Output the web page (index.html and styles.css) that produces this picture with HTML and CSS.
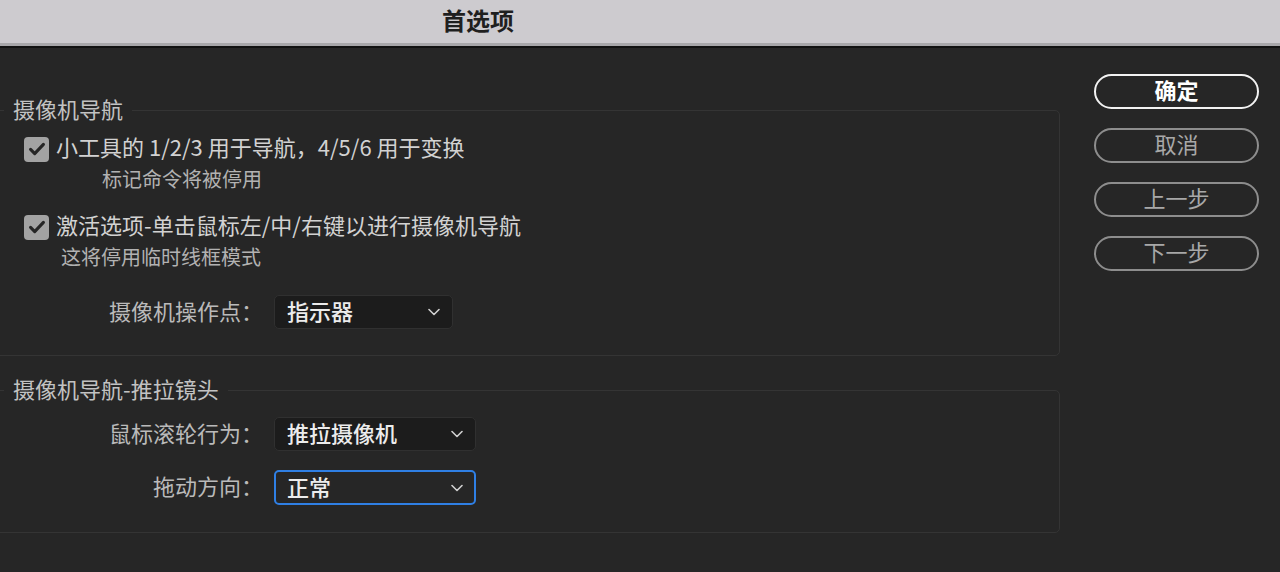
FILE: index.html
```html
<!DOCTYPE html>
<html lang="zh-CN">
<head>
  <meta charset="UTF-8" />
  <title>首选项</title>
  <link rel="stylesheet" href="styles.css">
</head>
<body>

  <header class="titlebar">
    <h1>首选项</h1>
  </header>

  <main class="dialog">
    <div class="panes">

      <!-- 摄像机导航 -->
      <fieldset class="group group-nav">
        <legend>摄像机导航</legend>

        <div class="option">
          <label class="check">
            <span class="box">
              <svg viewBox="0 0 24 24" width="22" height="22"><path d="M5 12.5l4.5 4.5L19 7" /></svg>
            </span>
            <span class="check-text">小工具的 1/2/3 用于导航，4/5/6 用于变换</span>
          </label>
          <div class="hint hint-tools">标记命令将被停用</div>
        </div>

        <div class="option option-next">
          <label class="check">
            <span class="box">
              <svg viewBox="0 0 24 24" width="22" height="22"><path d="M5 12.5l4.5 4.5L19 7" /></svg>
            </span>
            <span class="check-text">激活选项-单击鼠标左/中/右键以进行摄像机导航</span>
          </label>
          <div class="hint hint-mouse">这将停用临时线框模式</div>
        </div>

        <div class="field-row">
          <span class="field-label">摄像机操作点：</span>
          <div class="select narrow">
            <span class="select-value">指示器</span>
            <svg viewBox="0 0 12 8" width="12" height="8"><path d="M1 1.5l5 5 5-5" /></svg>
          </div>
        </div>
      </fieldset>

      <!-- 摄像机导航-推拉镜头 -->
      <fieldset class="group group-dolly">
        <legend>摄像机导航-推拉镜头</legend>

        <div class="field-row">
          <span class="field-label">鼠标滚轮行为：</span>
          <div class="select wide">
            <span class="select-value">推拉摄像机</span>
            <svg viewBox="0 0 12 8" width="12" height="8"><path d="M1 1.5l5 5 5-5" /></svg>
          </div>
        </div>

        <div class="field-row field-next">
          <span class="field-label">拖动方向：</span>
          <div class="select wide focused">
            <span class="select-value">正常</span>
            <svg viewBox="0 0 12 8" width="12" height="8"><path d="M1 1.5l5 5 5-5" /></svg>
          </div>
        </div>
      </fieldset>

    </div>

    <div class="actions">
      <button class="btn primary">确定</button>
      <button class="btn">取消</button>
      <button class="btn">上一步</button>
      <button class="btn">下一步</button>
    </div>
  </main>

</body>
</html>
```

FILE: styles.css
```css
html, body {
  margin: 0;
  height: 100%;
  background-color: #262626;
  font-family: "Noto Sans CJK SC", "Noto Sans", sans-serif;
  overflow: hidden;
}

.titlebar {
  height: 43px;
  background-color: #cdcbcf;
  border-bottom: 3px solid #a8a7aa;
  display: flex;
  align-items: center;
}

.titlebar h1 {
  width: 956px;
  margin: 0 0 4px;
  text-align: center;
  font-size: 24px;
  font-weight: 700;
  line-height: 1;
  color: #1f1f1f;
}

.dialog {
  display: flex;
  align-items: flex-start;
  border-top: 2px solid #121212;
}

.panes {
  width: 1074px;
  margin-left: -14px;
  flex-shrink: 0;
}

.group {
  margin: 0;
  border: 1px solid #343434;
  border-radius: 5px;
  padding: 0 0 0 17px;
  min-width: 0;
}

.group legend {
  padding: 0 9px 5px;
  font-size: 22px;
  line-height: 26px;
  color: #c2c2c2;
}

.group-nav {
  margin-top: 47px;
  padding-top: 8px;
  padding-bottom: 26px;
}

.group-dolly {
  margin-top: 19px;
  padding-top: 11px;
  padding-bottom: 27px;
}

.option {
  margin-left: 20px;
}

.option-next {
  margin-top: 18px;
}

.check {
  display: flex;
  align-items: center;
  height: 30px;
}

.check-text {
  padding-bottom: 6px;
  font-size: 22px;
  line-height: 26px;
  color: #d2d2d2;
}

.box {
  width: 25px;
  height: 25px;
  margin-right: 7px;
  border-radius: 4px;
  background-color: #a3a3a3;
  display: flex;
  align-items: center;
  justify-content: center;
  flex-shrink: 0;
}

.box path {
  fill: none;
  stroke: #262626;
  stroke-width: 3.4;
  stroke-linecap: round;
  stroke-linejoin: round;
}

.hint {
  font-size: 20px;
  line-height: 30px;
  color: #b2b2b2;
}

.hint-tools {
  margin-left: 78px;
}

.hint-mouse {
  margin-left: 37px;
}

.field-row {
  display: grid;
  grid-template-columns: 259px auto;
  column-gap: 11px;
  align-items: center;
  margin-top: 23px;
}

.group-dolly .field-row {
  margin-top: 0;
}

.group-dolly .field-next {
  margin-top: 19px;
}

.field-label {
  justify-self: end;
  padding-bottom: 5px;
  font-size: 22px;
  line-height: 26px;
  color: #bababa;
}

.select {
  box-sizing: border-box;
  height: 34px;
  display: flex;
  align-items: center;
  justify-content: space-between;
  padding: 0 12px 0 12px;
  background-color: #1c1c1c;
  border: 1px solid #303030;
  border-radius: 5px;
}

.select-value {
  padding-bottom: 4px;
  font-size: 22px;
  line-height: 26px;
  font-weight: 500;
  color: #ececec;
}

.select.narrow {
  width: 179px;
}

.select.wide {
  width: 202px;
}

.select.focused {
  height: 35px;
  padding-left: 11px;
  padding-right: 11px;
  background-color: #262626;
  border: 2px solid #2f7fe4;
}

.select path {
  fill: none;
  stroke: #d0d0d0;
  stroke-width: 1.6;
  stroke-linecap: round;
  stroke-linejoin: round;
}

.actions {
  display: flex;
  flex-direction: column;
  gap: 19px;
  margin-left: 34px;
  padding-top: 26px;
}

.btn {
  width: 165px;
  height: 35px;
  padding: 0 0 5px;
  border: 2px solid #8d8d8d;
  border-radius: 18px;
  background: transparent;
  font-family: inherit;
  font-size: 22px;
  line-height: 1;
  color: #a8a8a8;
  cursor: pointer;
}

.btn.primary {
  border-color: #f2f2f2;
  color: #ffffff;
  font-weight: 700;
}
```
